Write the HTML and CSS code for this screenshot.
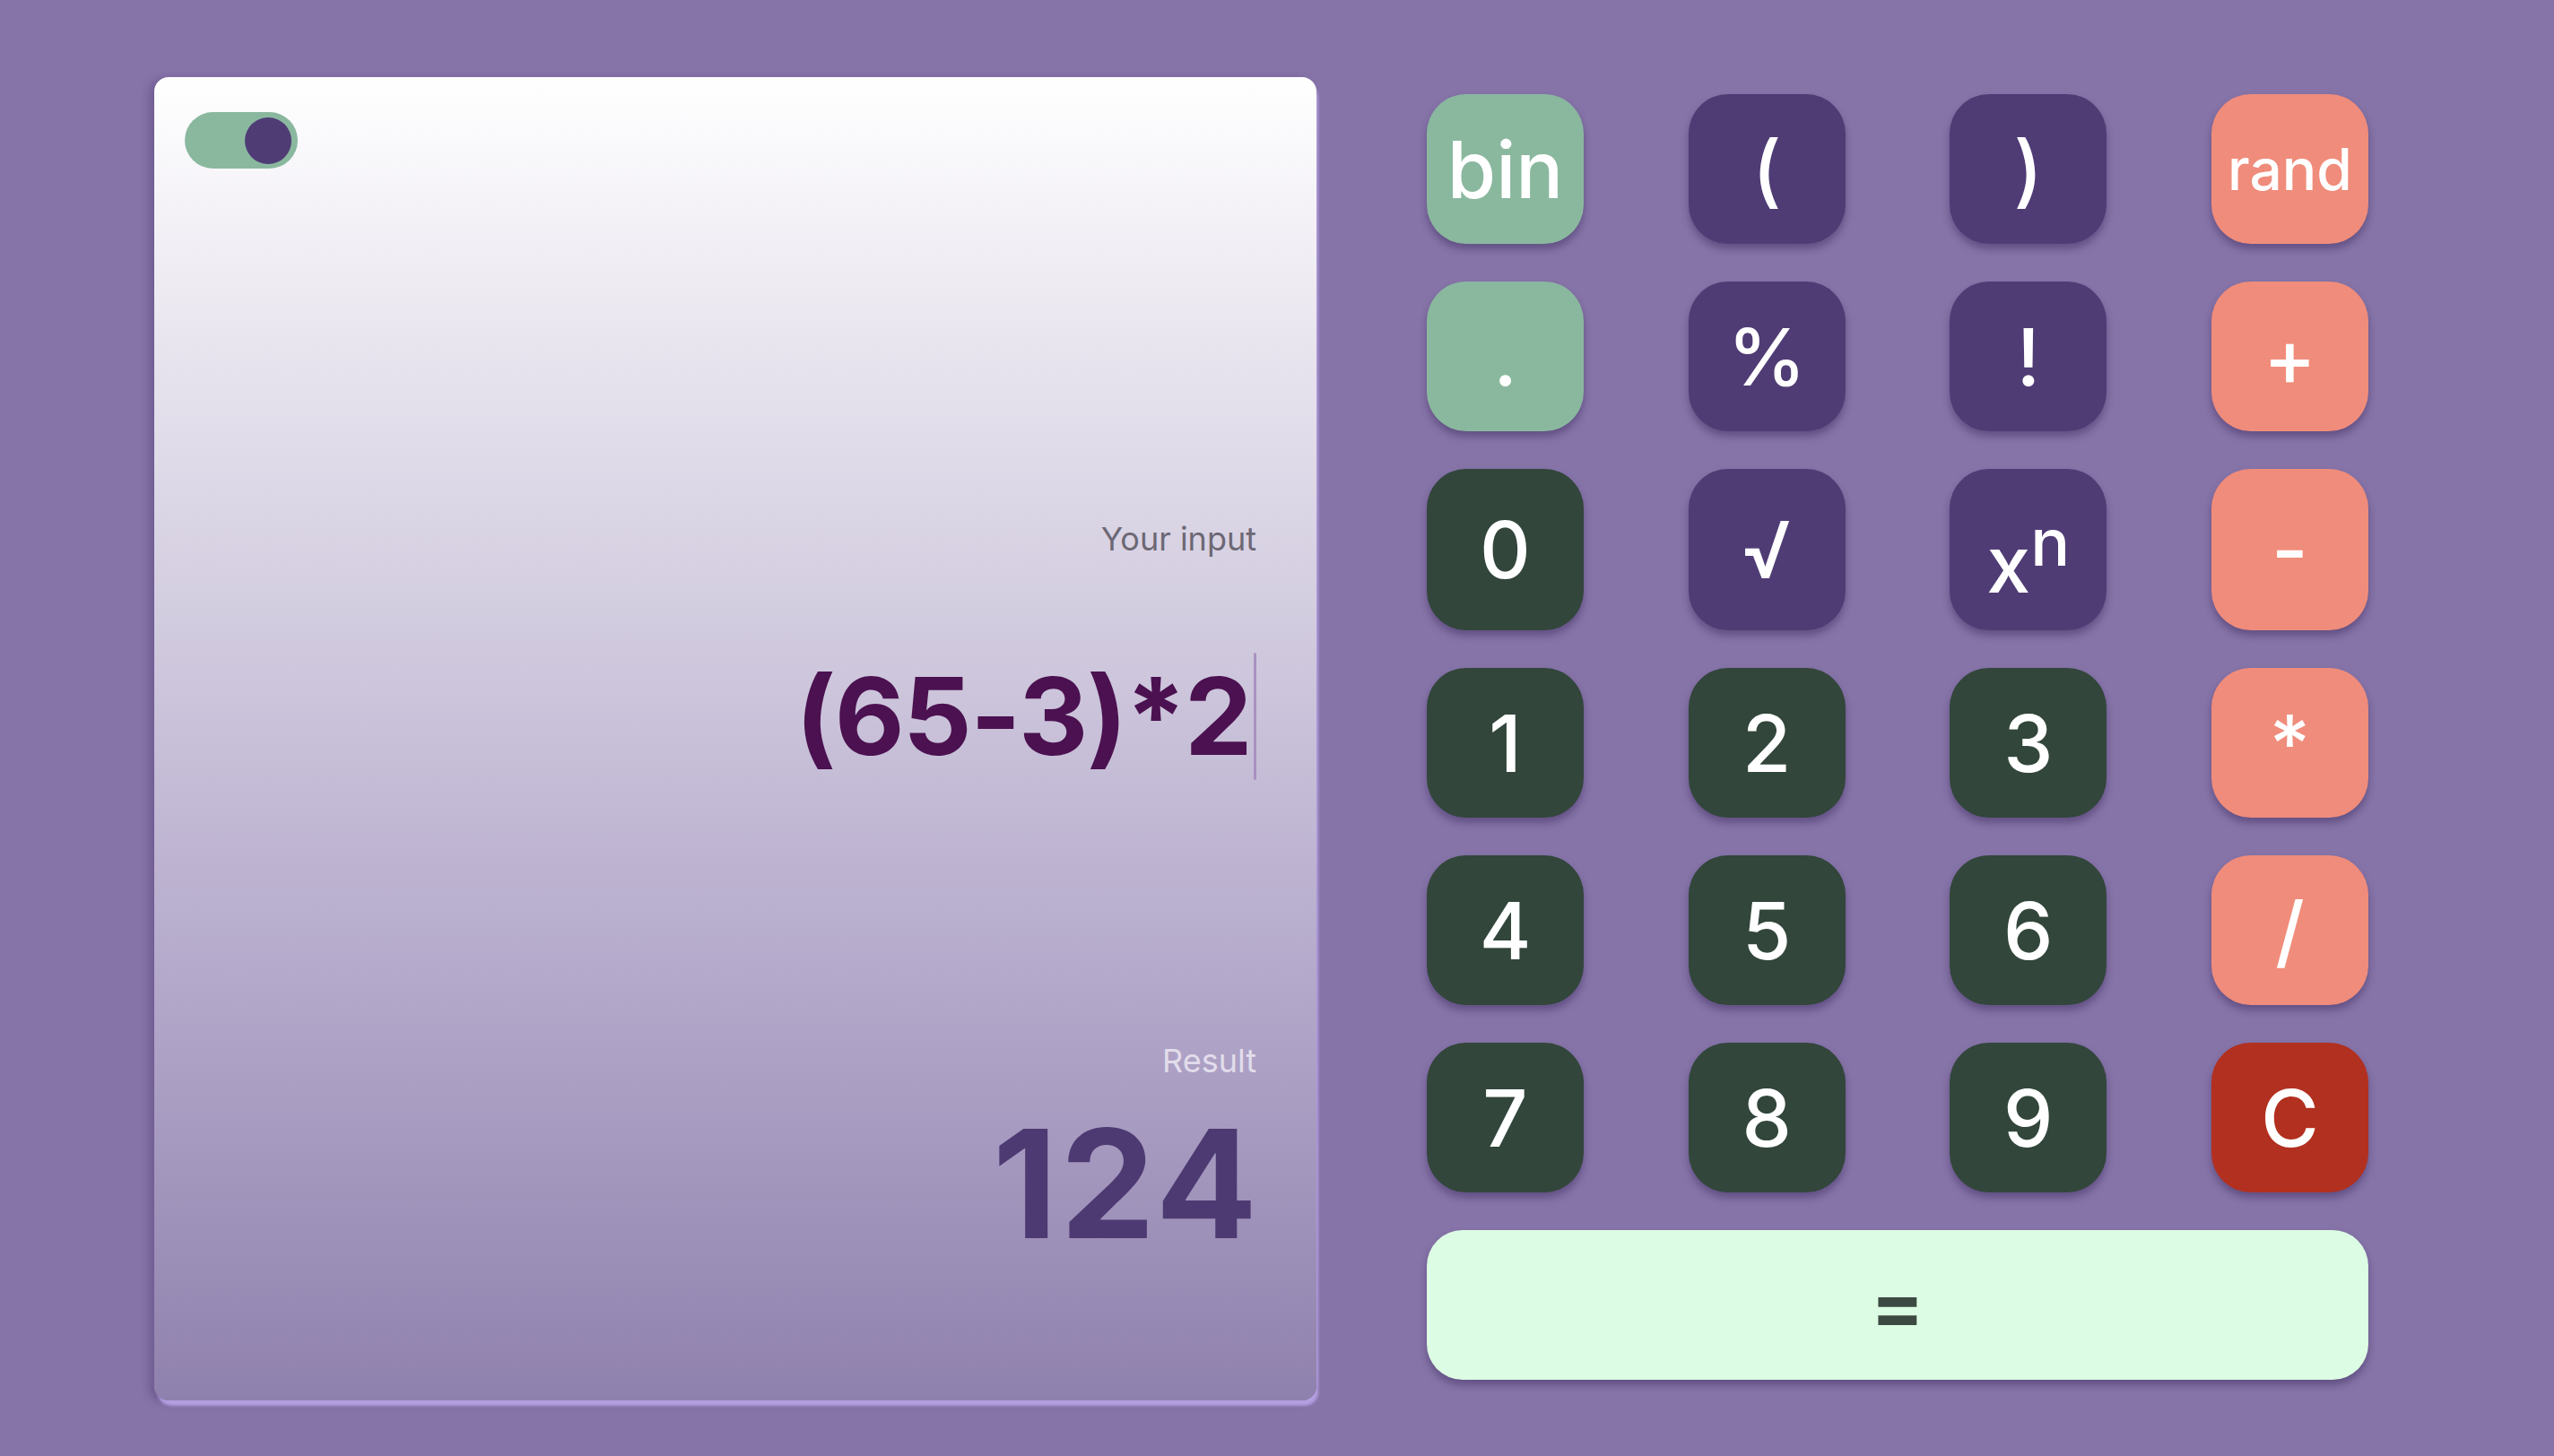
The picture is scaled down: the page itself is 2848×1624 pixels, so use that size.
FILE: index.html
```html
<!DOCTYPE html>
<html lang="en">
<head>
<meta charset="utf-8">
<title>Calculator</title>
<link rel="stylesheet" href="styles.css">
</head>
<body>
<main class="app">
  <section class="display">
    <div class="toggle"><span class="knob"></span></div>
    <div class="label label-input">Your input</div>
    <div class="input-row"><span class="expr">(65-3)*2</span><span class="caret"></span></div>
    <div class="label label-result">Result</div>
    <div class="result">124</div>
  </section>
  <section class="keypad">
    <button class="key green">bin</button>
    <button class="key purple">(</button>
    <button class="key purple">)</button>
    <button class="key salmon small">rand</button>

    <button class="key green">.</button>
    <button class="key purple">%</button>
    <button class="key purple">!</button>
    <button class="key salmon">+</button>

    <button class="key dark">0</button>
    <button class="key purple">√</button>
    <button class="key purple"><span class="pow">x<sup>n</sup></span></button>
    <button class="key salmon">-</button>

    <button class="key dark">1</button>
    <button class="key dark">2</button>
    <button class="key dark">3</button>
    <button class="key salmon">*</button>

    <button class="key dark">4</button>
    <button class="key dark">5</button>
    <button class="key dark">6</button>
    <button class="key salmon">/</button>

    <button class="key dark">7</button>
    <button class="key dark">8</button>
    <button class="key dark">9</button>
    <button class="key red">C</button>

    <button class="key equals">=</button>
  </section>
</main>
</body>
</html>
```

FILE: styles.css
```css
html, body {
  margin: 0;
  padding: 0;
}

body {
  background: #8674a8;
  width: 2848px;
  height: 1624px;
  overflow: hidden;
}

.app {
  display: flex;
  align-items: flex-start;
  gap: 123px;
  padding: 86px 0 0 172px;
}

.display {
  box-sizing: border-box;
  width: 1296px;
  height: 1476px;
  border-radius: 16px;
  background: linear-gradient(180deg, #ffffff 0%, #e9e5ef 20%, #d3cde0 40%, #bdb3d1 60%, #a69ac0 80%, #8f81ad 100%);
  box-shadow: 3px 7px 3px -1px #b39ee0, -6px 2px 10px rgba(70, 50, 110, 0.35);
  display: flex;
  flex-direction: column;
  align-items: flex-end;
  padding: 39px 67px 0 34px;
  font-family: "Inter", "Liberation Sans", sans-serif;
}

.toggle {
  align-self: flex-start;
  box-sizing: border-box;
  width: 126px;
  height: 63px;
  border-radius: 32px;
  background: #8ab89f;
  display: flex;
  align-items: center;
  justify-content: flex-end;
  padding-right: 7px;
}

.knob {
  width: 52px;
  height: 52px;
  border-radius: 50%;
  background: #4f3c75;
}

.label {
  font-size: 36px;
  line-height: 36px;
  font-weight: 400;
}

.label-input {
  margin-top: 395px;
  color: #6c6874;
}

.input-row {
  margin-top: 109px;
  display: flex;
  align-items: center;
  height: 142px;
}

.expr {
  font-size: 120px;
  line-height: 120px;
  font-weight: 700;
  color: #4b1150;
  letter-spacing: -1.6px;
}

.caret {
  width: 3px;
  height: 142px;
  margin-left: 3px;
  border-radius: 2px;
  background: #a892c0;
}

.label-result {
  margin-top: 295px;
  color: #e2ddeb;
}

.result {
  margin-top: 35px;
  margin-right: -4px;
  font-size: 168px;
  line-height: 168px;
  font-weight: 700;
  color: #4d3a72;
  letter-spacing: 3px;
}

.keypad {
  margin-top: 19px;
  display: grid;
  grid-template-columns: repeat(4, 175px);
  grid-template-rows: 167px 167px 180px 167px 167px 167px 167px;
  column-gap: 116.67px;
  row-gap: 42px;
  font-family: "Inter", "Liberation Sans", sans-serif;
}

.key {
  border: none;
  margin: 0;
  padding: 0;
  border-radius: 44px;
  font-family: inherit;
  font-size: 88px;
  line-height: 1;
  font-weight: 500;
  color: #ffffff;
  display: flex;
  align-items: center;
  justify-content: center;
  box-shadow: 0 6px 8px rgba(55, 38, 88, 0.45);
}

.key.small {
  font-size: 64px;
}

.pow {
  display: inline-block;
  line-height: 1;
  padding-top: 16px;
}

.pow sup {
  font-size: 0.83em;
  line-height: 1;
  vertical-align: super;
}

.green { background: #8ab89f; }
.purple { background: #4f3c75; }
.salmon { background: #f08c7b; }
.dark { background: #32463b; }
.red { background: #b2301f; }

.equals {
  grid-column: 1 / -1;
  background: #dcfce3;
  color: #3c4a42;
  font-weight: 700;
  border-radius: 40px;
}
```
